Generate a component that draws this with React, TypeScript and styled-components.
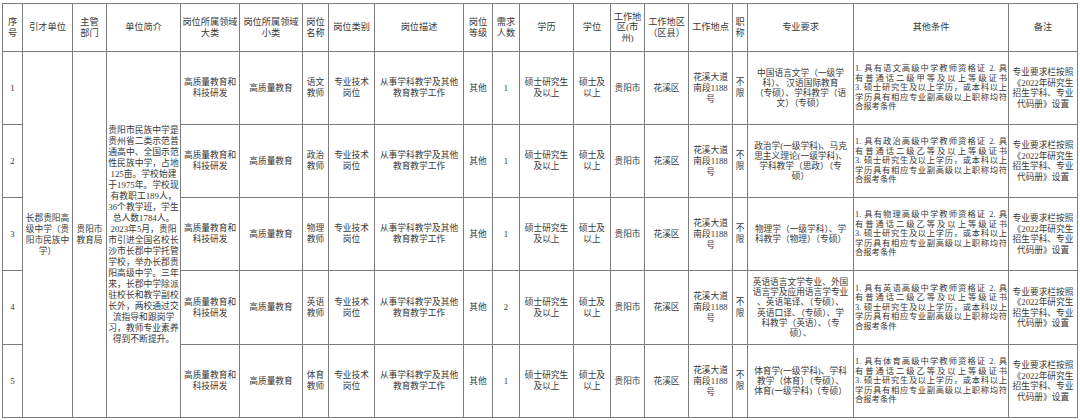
import React from 'react';
import styled, { createGlobalStyle } from 'styled-components';

const GlobalStyle = createGlobalStyle`
  html, body {
    margin: 0;
    background: #fff;
  }
  body {
    padding: 3px 0 0 2px;
    font-family: "Liberation Serif", "Noto Sans CJK SC", serif;
    color: #383838;
  }
`;

const Table = styled.table`
  border-collapse: collapse;
  table-layout: fixed;
  width: 1075px;
`;

const HeadRow = styled.tr`
  height: 48px;
`;

const BodyRow = styled.tr<{ $h: number }>`
  height: ${({ $h }) => $h}px;
`;

const HeadCell = styled.th`
  border: 1px solid #7d7d7d;
  font-weight: normal;
  font-size: 9.2px;
  line-height: 10.6px;
  text-align: center;
  vertical-align: middle;
  padding: 0 1px;
`;

const Cell = styled.td<{ $lh?: number; $fs?: number }>`
  border: 1px solid #7d7d7d;
  font-size: ${({ $fs }) => $fs ?? 8.7}px;
  line-height: ${({ $lh }) => $lh ?? 11}px;
  text-align: center;
  vertical-align: middle;
  padding: 0 1px;
`;

const Line = styled.span<{ $justify?: boolean }>`
  display: block;
  white-space: nowrap;
  text-align: ${({ $justify }) => ($justify ? 'justify' : 'center')};
  text-align-last: ${({ $justify }) => ($justify ? 'justify' : 'center')};
`;

const LeftLine = styled(Line)`
  text-align-last: left;
`;

const Lines: React.FC<{ items: string[]; justify?: boolean }> = ({ items, justify }) => (
  <>
    {items.map((t, i) =>
      justify && i === items.length - 1 ? (
        <LeftLine key={i}>{t}</LeftLine>
      ) : (
        <Line key={i} $justify={justify}>
          {t}
        </Line>
      ),
    )}
  </>
);

const colWidths = [20, 50, 34, 74, 59, 63, 26, 46, 89, 29, 27, 54, 37, 34, 44, 44, 15, 106, 155, 69];

const headers: string[][] = [
  ['序', '号'],
  ['引才单位'],
  ['主管', '部门'],
  ['单位简介'],
  ['岗位所属领域', '大类'],
  ['岗位所属领域', '小类'],
  ['岗位', '名称'],
  ['岗位类别'],
  ['岗位描述'],
  ['岗位', '等级'],
  ['需求', '人数'],
  ['学历'],
  ['学位'],
  ['工作地', '区(市', '州)'],
  ['工作地区', '（区县）'],
  ['工作地点'],
  ['职', '称'],
  ['专业要求'],
  ['其他条件'],
  ['备注'],
];

const intro = [
  '贵阳市民族中学是',
  '贵州省二类示范普',
  '通高中、全国示范',
  '性民族中学，占地',
  '125亩。学校始建',
  '于1975年。学校现',
  '有教职工189人，',
  '36个教学班，学生',
  '总人数1784人。',
  '2023年5月，贵阳',
  '市引进全国名校长',
  '沙市长郡中学托管',
  '学校，举办长郡贵',
  '阳高级中学。三年',
  '来，长郡中学除派',
  '驻校长和教学副校',
  '长外，两校通过交',
  '流指导和跟岗学',
  '习，教师专业素养',
  '得到不断提升。',
];

type Post = {
  no: string;
  h: number;
  subject: string;
  count: string;
  level: string;
  spec: string[];
};

const posts: Post[] = [
  {
    no: '1',
    h: 73,
    subject: '语文',
    count: '1',
    level: '甲',
    spec: ['中国语言文学（一级学', '科）、 汉语国际教育', '（专硕）、学科教学（语', '文）（专硕）'],
  },
  {
    no: '2',
    h: 73,
    subject: '政治',
    count: '1',
    level: '乙',
    spec: ['政治学(一级学科)、马克', '思主义理论(一级学科)、', '学科教学（思政）（专', '硕）'],
  },
  {
    no: '3',
    h: 73,
    subject: '物理',
    count: '1',
    level: '乙',
    spec: ['物理学（一级学科）、学', '科教学（物理）（专硕）'],
  },
  {
    no: '4',
    h: 74,
    subject: '英语',
    count: '2',
    level: '乙',
    spec: [
      '英语语言文学专业、外国',
      '语言学及应用语言学专业',
      '、英语笔译、（专硕）、',
      '英语口译、（专硕）、学',
      '科教学（英语）、（专',
      '硕）、',
    ],
  },
  {
    no: '5',
    h: 73,
    subject: '体育',
    count: '1',
    level: '乙',
    spec: ['体育学(一级学科)、学科', '教学（体育）（专硕）、', '体育(一级学科)（专硕）'],
  },
];

const conditions = (subject: string, level: string) => [
  `1. 具有${subject}高级中学教师资格证 2. 具`,
  `有普通话二级${level}等及以上等级证书`,
  '3. 硕士研究生及以上学历，或本科以上',
  '学历具有相应专业副高级以上职称均符',
  '合报考条件',
];

const remark = ['专业要求栏按照', '《2022年研究生', '招生学科、专业', '代码册》设置'];

const App: React.FC = () => (
  <>
    <GlobalStyle />
    <Table>
      <colgroup>
        {colWidths.map((w, i) => (
          <col key={i} style={{ width: w }} />
        ))}
      </colgroup>
      <thead>
        <HeadRow>
          {headers.map((h, i) => (
            <HeadCell key={i}>
              <Lines items={h} />
            </HeadCell>
          ))}
        </HeadRow>
      </thead>
      <tbody>
        {posts.map((p, i) => (
          <BodyRow key={p.no} $h={p.h}>
            <Cell>{p.no}</Cell>
            {i === 0 && (
              <>
                <Cell rowSpan={5}>
                  <Lines items={['长郡贵阳高', '级中学（贵', '阳市民族中', '学）']} />
                </Cell>
                <Cell rowSpan={5}>
                  <Lines items={['贵阳市', '教育局']} />
                </Cell>
                <Cell rowSpan={5} $fs={8.8} $lh={11}>
                  <Lines items={intro} />
                </Cell>
              </>
            )}
            <Cell>
              <Lines items={['高质量教育和', '科技研发']} />
            </Cell>
            <Cell>高质量教育</Cell>
            <Cell>
              <Lines items={[p.subject, '教师']} />
            </Cell>
            <Cell>
              <Lines items={['专业技术', '岗位']} />
            </Cell>
            <Cell>
              <Lines items={['从事学科教学及其他', '教育教学工作']} />
            </Cell>
            <Cell>其他</Cell>
            <Cell>{p.count}</Cell>
            <Cell>
              <Lines items={['硕士研究生', '及以上']} />
            </Cell>
            <Cell>
              <Lines items={['硕士及', '以上']} />
            </Cell>
            <Cell>贵阳市</Cell>
            <Cell>花溪区</Cell>
            <Cell>
              <Lines items={['花溪大道', '南段1188', '号']} />
            </Cell>
            <Cell>
              <Lines items={['不', '限']} />
            </Cell>
            <Cell $lh={10.2}>
              <Lines items={p.spec} />
            </Cell>
            <Cell $fs={8.3} $lh={9.4}>
              <Lines items={conditions(p.subject, p.level)} justify />
            </Cell>
            <Cell $lh={10.5}>
              <Lines items={remark} />
            </Cell>
          </BodyRow>
        ))}
      </tbody>
    </Table>
  </>
);

export default App;
